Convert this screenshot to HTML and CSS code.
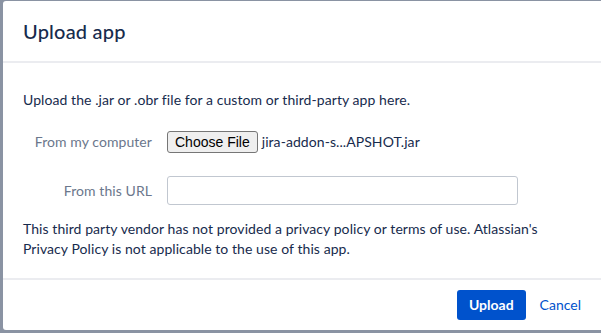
FILE: index.html
```html
<!DOCTYPE html>
<html lang="en">
  <head>
    <meta charset="UTF-8" />
    <title>Upload app</title>
    <link rel="stylesheet" href="styles.css">
  </head>
  <body>
    <div class="dialog">
      <header class="dialog-header">
        <h2>Upload app</h2>
      </header>

      <div class="dialog-body">
        <p class="intro">Upload the .jar or .obr file for a custom or third-party app here.</p>

        <form class="upload-form">
          <div class="field-row">
            <label class="field-label">From my computer</label>
            <div class="file-picker">
              <button type="button" class="file-button">Choose File</button>
              <span class="file-name">jira-addon-s...APSHOT.jar</span>
            </div>
          </div>
          <div class="field-row">
            <label class="field-label" for="app-url">From this URL</label>
            <input type="text" id="app-url" class="text-input" />
          </div>
        </form>

        <p class="notice">
          This third party vendor has not provided a privacy policy or terms of use. Atlassian's
          Privacy Policy is not applicable to the use of this app.
        </p>
      </div>

      <footer class="dialog-footer">
        <button type="submit" class="btn-primary">Upload</button>
        <button type="button" class="btn-link">Cancel</button>
      </footer>
    </div>
  </body>
</html>
```

FILE: styles.css
```css
body {
  margin: 0;
  padding: 1px 0 0 3px;
  height: 332px;
  overflow: hidden;
  background-color: #8a93a3;
  font-family: "Segoe UI", Lato, sans-serif;
  font-size: 14px;
  line-height: 20px;
  letter-spacing: 0.07px;
  color: #172b4d;
}

.dialog {
  width: 600px;
  height: 329px;
  background: white;
  border-radius: 3px;
  display: flex;
  flex-direction: column;
}

.dialog-header {
  height: 60px;
  padding: 0 20px;
  display: flex;
  align-items: center;
  border-bottom: 2px solid #ebecf0;
}

.dialog-header h2 {
  margin: 0;
  font-size: 20px;
  font-weight: 500;
  letter-spacing: 0.2px;
  color: #172b4d;
}

.dialog-body {
  padding: 27px 20px 19px;
  border-bottom: 2px solid #ebecf0;
}

.intro,
.notice {
  margin: 0;
}

.upload-form {
  margin: 21px 0 14px;
  display: flex;
  flex-direction: column;
  gap: 23px;
}

.field-row {
  display: grid;
  grid-template-columns: 129px 1fr;
  column-gap: 15px;
  align-items: center;
}

.field-label {
  text-align: right;
  color: #6b778c;
}

.file-picker {
  display: flex;
  align-items: center;
  height: 22px;
}

.file-button {
  font-family: "Liberation Sans", Arial, sans-serif;
  font-size: 14px;
  letter-spacing: 0;
  height: 22px;
  padding: 0 7px;
  background-color: #efefef;
  border: 1px solid #767676;
  border-radius: 3px;
  color: #000;
}

.file-name {
  margin-left: 4px;
}

.text-input {
  width: 351px;
  height: 29px;
  box-sizing: border-box;
  border: 1px solid #c1c7d0;
  border-radius: 3px;
  padding: 4px 6px;
  font: inherit;
}

.dialog-footer {
  flex: 1;
  display: flex;
  align-items: center;
  justify-content: flex-end;
  padding: 0 12px 0 20px;
}

.btn-primary {
  height: 30px;
  padding: 0 12px;
  border: none;
  border-radius: 3px;
  background-color: #0052cc;
  color: white;
  font: inherit;
  font-weight: bold;
  cursor: pointer;
}

.btn-link {
  margin-left: 4px;
  height: 30px;
  padding: 0 10px;
  border: none;
  background: none;
  color: #0052cc;
  font: inherit;
  cursor: pointer;
}
```
